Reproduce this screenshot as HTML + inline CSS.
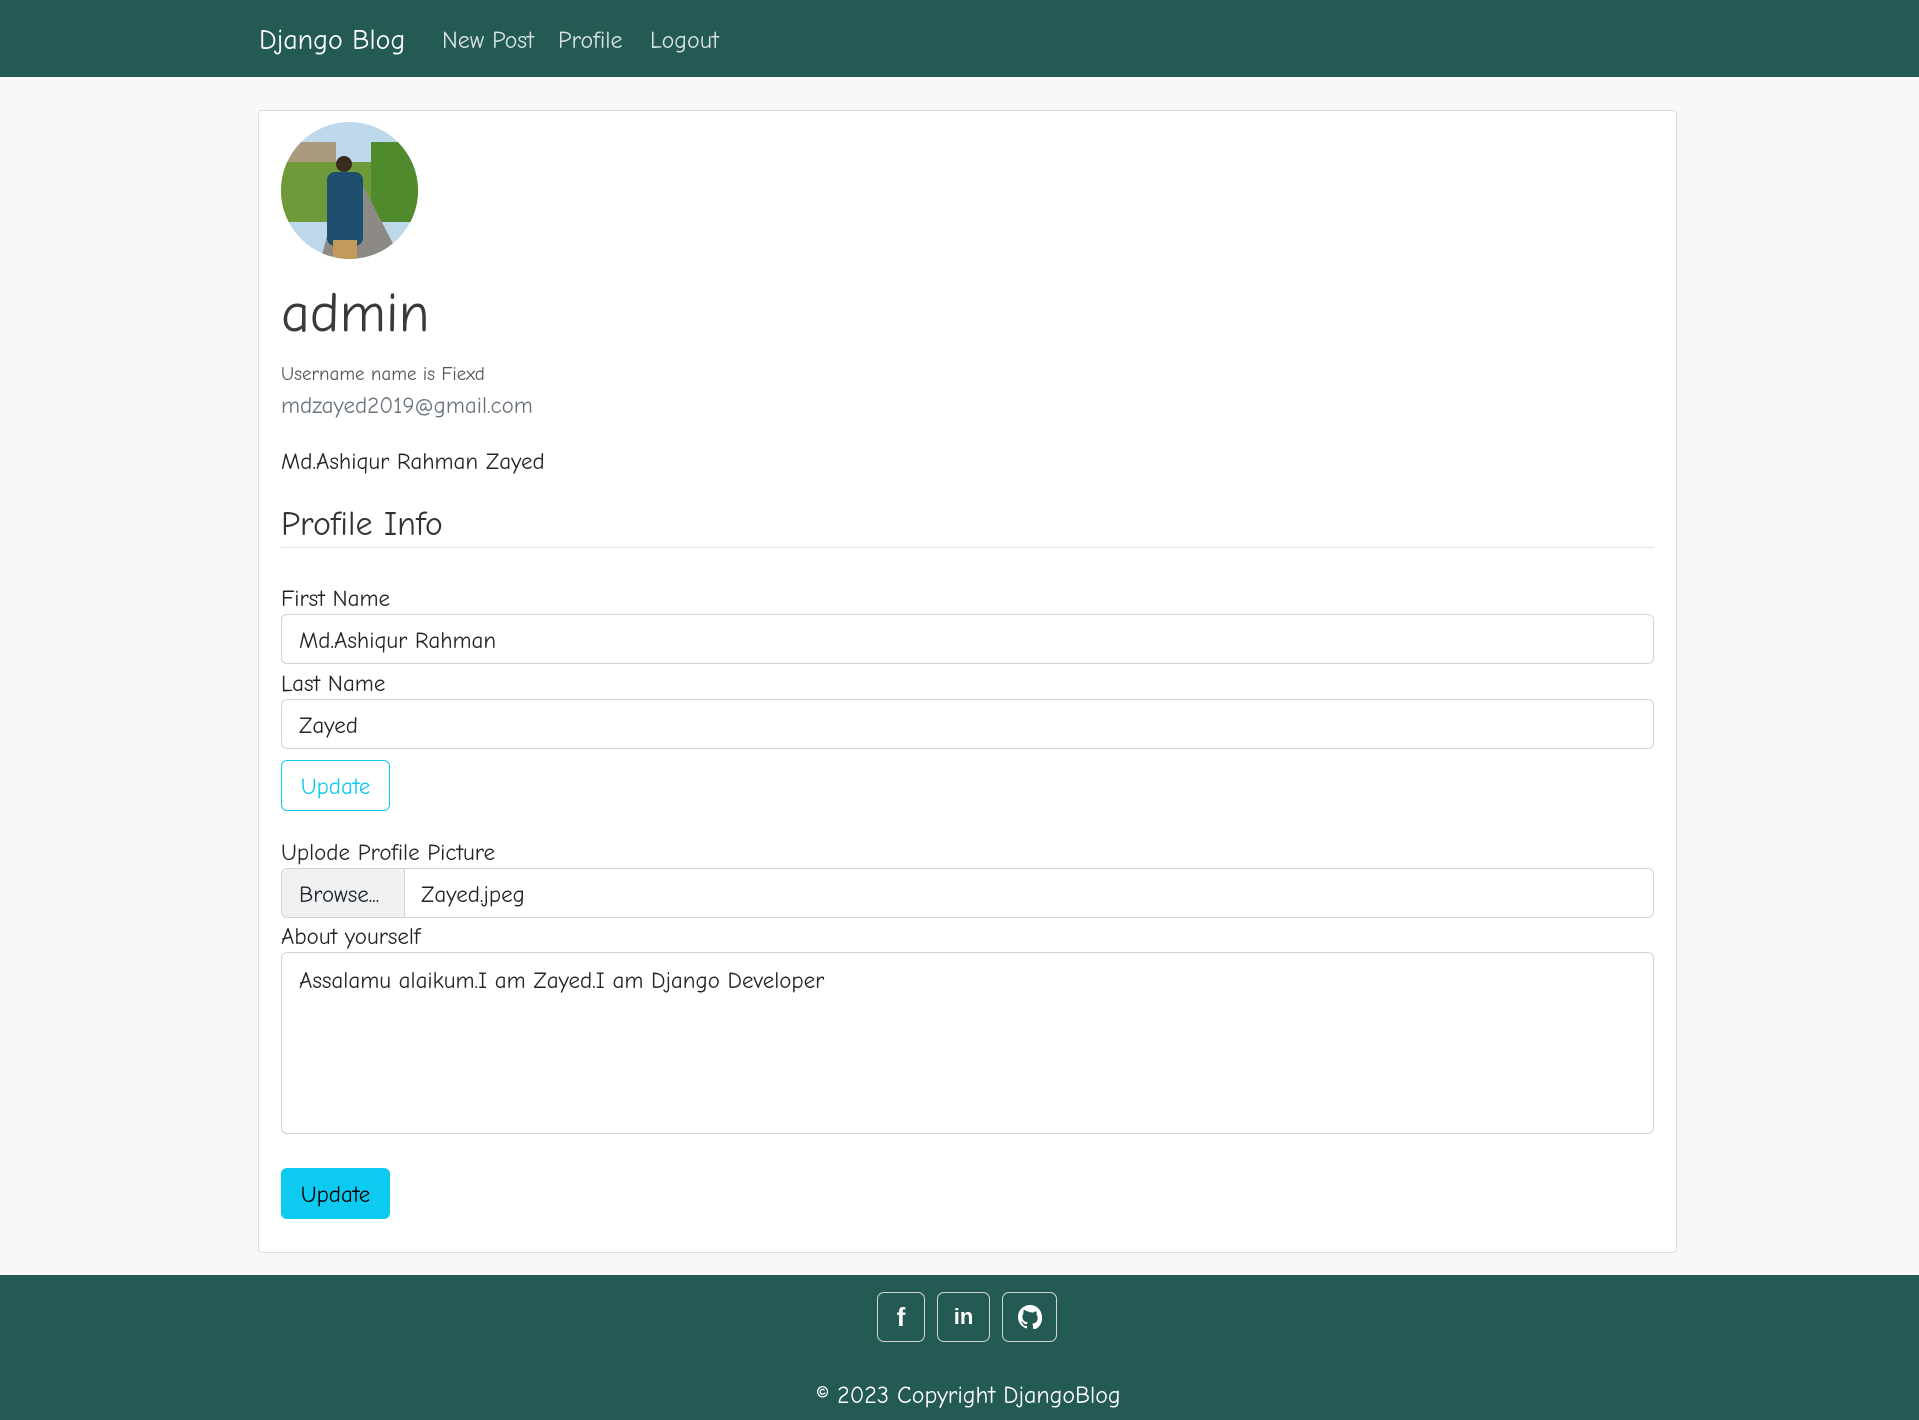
<!DOCTYPE html>
<html><head><meta charset="utf-8"><style>
*{box-sizing:border-box;margin:0;padding:0}
body{width:1919px;height:1420px;background:#f8f8f8;font-family:"Comic Sans MS","Comic Neue","Liberation Sans",sans-serif;color:#212529;position:relative;overflow:hidden}
.a{position:absolute;white-space:nowrap}
nav{position:absolute;left:0;top:0;width:1919px;height:77px;background:#245a54}
.card{position:absolute;left:258px;top:110px;width:1419px;height:1143px;background:#fff;border:1px solid #ddd;border-radius:4px}
.inp{position:absolute;left:281px;width:1373px;border:1px solid #ced4da;border-radius:6px;background:#fff;font-size:23px;padding-left:17px;display:flex;align-items:center;padding-top:2px}
.lbl{font-size:23px}
footer{position:absolute;left:0;top:1275px;width:1919px;height:145px;background:#245a54}
.ic{position:absolute;top:17px;height:50px;border:1px solid #cfd8d6;border-radius:7px;display:flex;align-items:center;justify-content:center;color:#fff;font-weight:bold;font-family:"Liberation Sans",sans-serif}
</style></head><body>
<nav>
<div class="a" style="left:259px;top:24px;font-size:28px;color:#fff">Django Blog</div>
<div class="a" style="left:442px;top:26px;font-size:24px;color:#d8e2e0">New Post</div>
<div class="a" style="left:558px;top:26px;font-size:24px;color:#d8e2e0">Profile</div>
<div class="a" style="left:650px;top:26px;font-size:24px;color:#d8e2e0">Logout</div>
</nav>
<div class="card"></div>
<svg class="a" style="left:281px;top:122px" width="137" height="137" viewBox="0 0 137 137">
<defs><clipPath id="c"><circle cx="68.5" cy="68.5" r="68.5"/></clipPath></defs>
<g clip-path="url(#c)">
<rect width="137" height="137" fill="#bcd8ea"/>
<rect y="20" width="55" height="70" fill="#a99a80"/>
<rect y="40" width="137" height="60" fill="#6e9a3a"/>
<rect x="90" y="20" width="47" height="80" fill="#4f8a2c"/>
<polygon points="40,137 60,60 80,60 120,137" fill="#8d8a85"/>
<rect x="46" y="50" width="36" height="74" rx="8" fill="#1f4f6e"/>
<circle cx="63" cy="42" r="8" fill="#3a2a20"/>
<rect x="52" y="118" width="24" height="19" fill="#c49a5a"/>
</g></svg>
<div class="a" style="left:281px;top:281px;font-size:56px;color:#3a3a3a">admin</div>
<div class="a" style="left:281px;top:363px;font-size:19px;color:#555">Username name is Fiexd</div>
<div class="a" style="left:281px;top:392px;font-size:23px;color:#6c757d">mdzayed2019@gmail.com</div>
<div class="a" style="left:281px;top:448px;font-size:23px">Md.Ashiqur Rahman Zayed</div>
<div class="a" style="left:281px;top:504px;font-size:34px;color:#333">Profile Info</div>
<div class="a" style="left:281px;top:547px;width:1373px;height:1px;background:#e5e5e5"></div>
<div class="a lbl" style="left:281px;top:585px">First Name</div>
<div class="inp" style="top:614px;height:50px">Md.Ashiqur Rahman</div>
<div class="a lbl" style="left:281px;top:670px">Last Name</div>
<div class="inp" style="top:699px;height:50px">Zayed</div>
<div class="a" style="left:281px;top:760px;width:109px;height:51px;border:1px solid #0dcaf0;border-radius:6px;color:#0dcaf0;font-size:23px;display:flex;align-items:center;justify-content:center;padding-top:2px">Update</div>
<div class="a lbl" style="left:281px;top:839px">Uplode Profile Picture</div>
<div class="inp" style="top:868px;height:50px;padding-left:0;padding-top:0"><div style="width:123px;height:100%;background:#f0f1f3;border-right:1px solid #ced4da;display:flex;align-items:center;padding-left:17px;padding-top:2px;border-radius:6px 0 0 6px">Browse...</div><span style="padding-left:16px;padding-top:2px">Zayed.jpeg</span></div>
<div class="a lbl" style="left:281px;top:923px">About yourself</div>
<div class="inp" style="top:952px;height:182px;align-items:flex-start;padding-top:14px">Assalamu alaikum.I am Zayed.I am Django Developer</div>
<div class="a" style="left:281px;top:1168px;width:109px;height:51px;background:#0dcaf0;border-radius:6px;color:#000;font-size:23px;display:flex;align-items:center;justify-content:center;padding-top:2px">Update</div>
<footer>
<div class="ic" style="left:877px;width:48px;font-size:26px">f</div>
<div class="ic" style="left:937px;width:53px;font-size:22px">in</div>
<div class="ic" style="left:1002px;width:55px"><svg width="24" height="24" viewBox="0 0 16 16"><path fill="#fff" d="M8 0C3.580 0 0 3.580 0 8c0 3.54 2.29 6.53 5.47 7.59.4.07.55-.17.55-.38v-1.330c-2.23.48-2.7-1.070-2.7-1.070-.36-.92-.89-1.170-.89-1.170-.73-.5.06-.49.06-.49.8.06 1.23.83 1.23.83.71 1.22 1.87.87 2.33.66.07-.52.28-.87.51-1.070-1.780-.2-3.640-.89-3.640-3.950 0-.87.31-1.590.82-2.150-.08-.2-.36-1.020.08-2.120 0 0 .67-.21 2.2.82A7.6 7.6 0 0 1 8 4.8c.68 0 1.36.09 2 .27 1.53-1.040 2.2-.82 2.2-.82.44 1.1.16 1.92.08 2.12.51.56.82 1.27.82 2.15 0 3.07-1.870 3.75-3.650 3.95.29.25.54.73.54 1.48v2.2c0 .21.15.46.55.38A8 8 0 0 0 16 8c0-4.420-3.580-8-8-8z"/></svg></div>
<div class="a" style="left:816px;top:106px;font-size:24px;color:#fff">© 2023 Copyright DjangoBlog</div>
</footer>
</body></html>
